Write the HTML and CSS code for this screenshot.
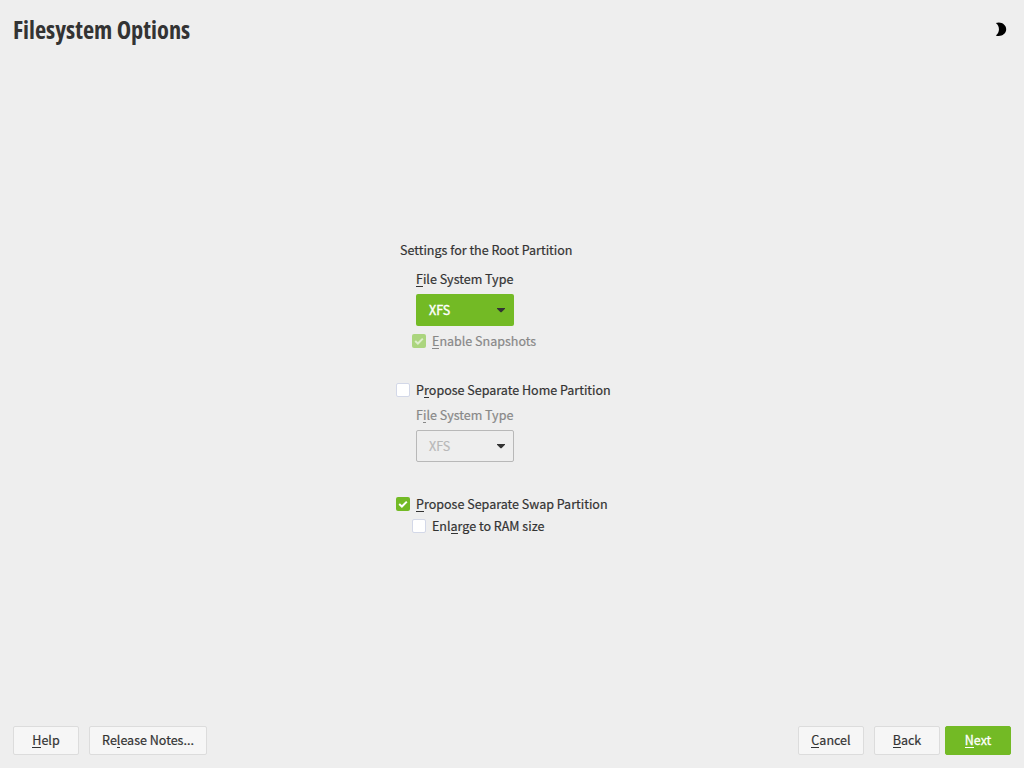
FILE: index.html
```html
<!DOCTYPE html>
<html lang="en">
<head>
<meta charset="utf-8">
<title>Filesystem Options</title>
<link rel="stylesheet" href="styles.css">
</head>
<body>
<div class="installer">
  <header class="header">
    <h1 class="title">Filesystem Options</h1>
    <svg class="moon" width="12" height="14" viewBox="0 0 12 14"><path d="M.8 1C5.600-1 11.200 2.200 11.200 7.200S5.600 15.200 .8 13.400C5 10.600 5 3.800 .8 1Z" fill="#000"/></svg>
  </header>
  <main class="options">
    <section class="group root">
      <div class="heading">Settings for the Root Partition</div>
      <div class="label indent"><u>F</u>ile System Type</div>
      <div class="combo active"><span>XFS</span><svg width="8" height="5" viewBox="0 0 8 5"><path d="M0 0H8V.8L4.500 4.200H3.500L0 .8Z" fill="#333"/></svg></div>
      <div class="check nested disabled"><span class="box on"><svg width="14" height="14" viewBox="0 0 14 14"><path d="M3.200 7L5.900 9.500L10.800 4.600" fill="none" stroke="#fff" stroke-width="2"/></svg></span><span><u>E</u>nable Snapshots</span></div>
    </section>
    <section class="group home">
      <div class="check"><span class="box"></span><span>P<u>r</u>opose Separate Home Partition</span></div>
      <div class="label indent muted">F<u>i</u>le System Type</div>
      <div class="combo off"><span>XFS</span><svg width="8" height="5" viewBox="0 0 8 5"><path d="M0 0H8V.8L4.500 4.200H3.500L0 .8Z" fill="#333"/></svg></div>
    </section>
    <section class="group swap">
      <div class="check"><span class="box on"><svg width="14" height="14" viewBox="0 0 14 14"><path d="M3.200 7L5.900 9.500L10.800 4.600" fill="none" stroke="#fff" stroke-width="2"/></svg></span><span><u>P</u>ropose Separate Swap Partition</span></div>
      <div class="check nested"><span class="box"></span><span>Enl<u>a</u>rge to RAM size</span></div>
    </section>
  </main>
  <footer class="footer">
    <div class="btn"><span><u>H</u>elp</span></div>
    <div class="btn wide"><span>Re<u>l</u>ease Notes...</span></div>
    <div class="btn push"><span><u>C</u>ancel</span></div>
    <div class="btn"><span><u>B</u>ack</span></div>
    <div class="btn next"><span><u>N</u>ext</span></div>
  </footer>
</div>
</body>
</html>
```
FILE: styles.css
```css
* { box-sizing: border-box; }
body {
  margin: 0;
  background: #eee;
  color: #333;
  font: 400 12.530px/22px "Noto Sans CJK SC", sans-serif;
  -webkit-text-stroke: 0.2px currentColor;
}
.installer {
  width: 1024px;
  height: 768px;
  display: flex;
  flex-direction: column;
}
.header {
  height: 60px;
  padding: 0 17px 0 13px;
  display: flex;
  justify-content: space-between;
}
.title {
  margin: 13px 0 0;
  font: 700 24.400px/33px "Open Sans", sans-serif;
  font-stretch: 75%;
  white-space: nowrap;
  -webkit-text-stroke: 0;
}
.moon { margin-top: 22px; }
u {
  text-decoration: none;
  background: linear-gradient(currentColor, currentColor) 0 calc(100% - 1px) / 100% 1px no-repeat;
  display: inline-block;
  height: 20px;
  line-height: 22px;
  vertical-align: top;
}
.options {
  flex: 1;
  padding: 179px 0 0 396px;
}
.heading { padding-left: 4px; height: 29px; }
.label { height: 26px; }
.indent { padding-left: 20px; }
.muted { color: #888; }
.combo {
  width: 98px;
  height: 32px;
  margin-left: 20px;
  padding: 0 9px 0 13px;
  border-radius: 2px;
  display: flex;
  align-items: center;
  justify-content: space-between;
}
.combo.active { background: #73ba25; color: #fff; }
.combo.active span { -webkit-text-stroke-width: 0.4px; }
.combo.off {
  border: 1px solid #b8b8b8;
  padding: 0 8px 0 12px;
}
.combo.off span { color: #b8b8b8; }
.check { display: flex; align-items: center; gap: 6px; height: 22px; }
.nested { padding-left: 16px; }
.box {
  width: 14px;
  height: 14px;
  border: 1px solid #d3d8e8;
  border-radius: 2px;
  background: #fff;
}
.box.on { border: 0; background: #73ba25; }
.box svg { display: block; }
.disabled { color: #888; }
.disabled .box { background: #abd57e; }
.disabled path { stroke: #ddeecb; }
.root .nested { margin-top: 4px; }
.home { margin-top: 27px; }
.home .label { margin-top: 3px; }
.swap { margin-top: 31px; }
.footer {
  height: 42px;
  padding: 0 13px;
  display: flex;
}
.btn {
  width: 66px;
  height: 29px;
  margin-right: 10px;
  padding-bottom: 1px;
  border: 1px solid #dcdcdc;
  border-radius: 2px;
  background: #f6f6f6;
  display: flex;
  align-items: center;
  justify-content: center;
}
.wide { width: 118px; }
.push { margin-left: auto; }
.next {
  margin: 0 0 0 -5px;
  background: #73ba25;
  border-color: #73ba25;
  color: #fff;
}
.next span { -webkit-text-stroke-width: 0.3px; }
```
